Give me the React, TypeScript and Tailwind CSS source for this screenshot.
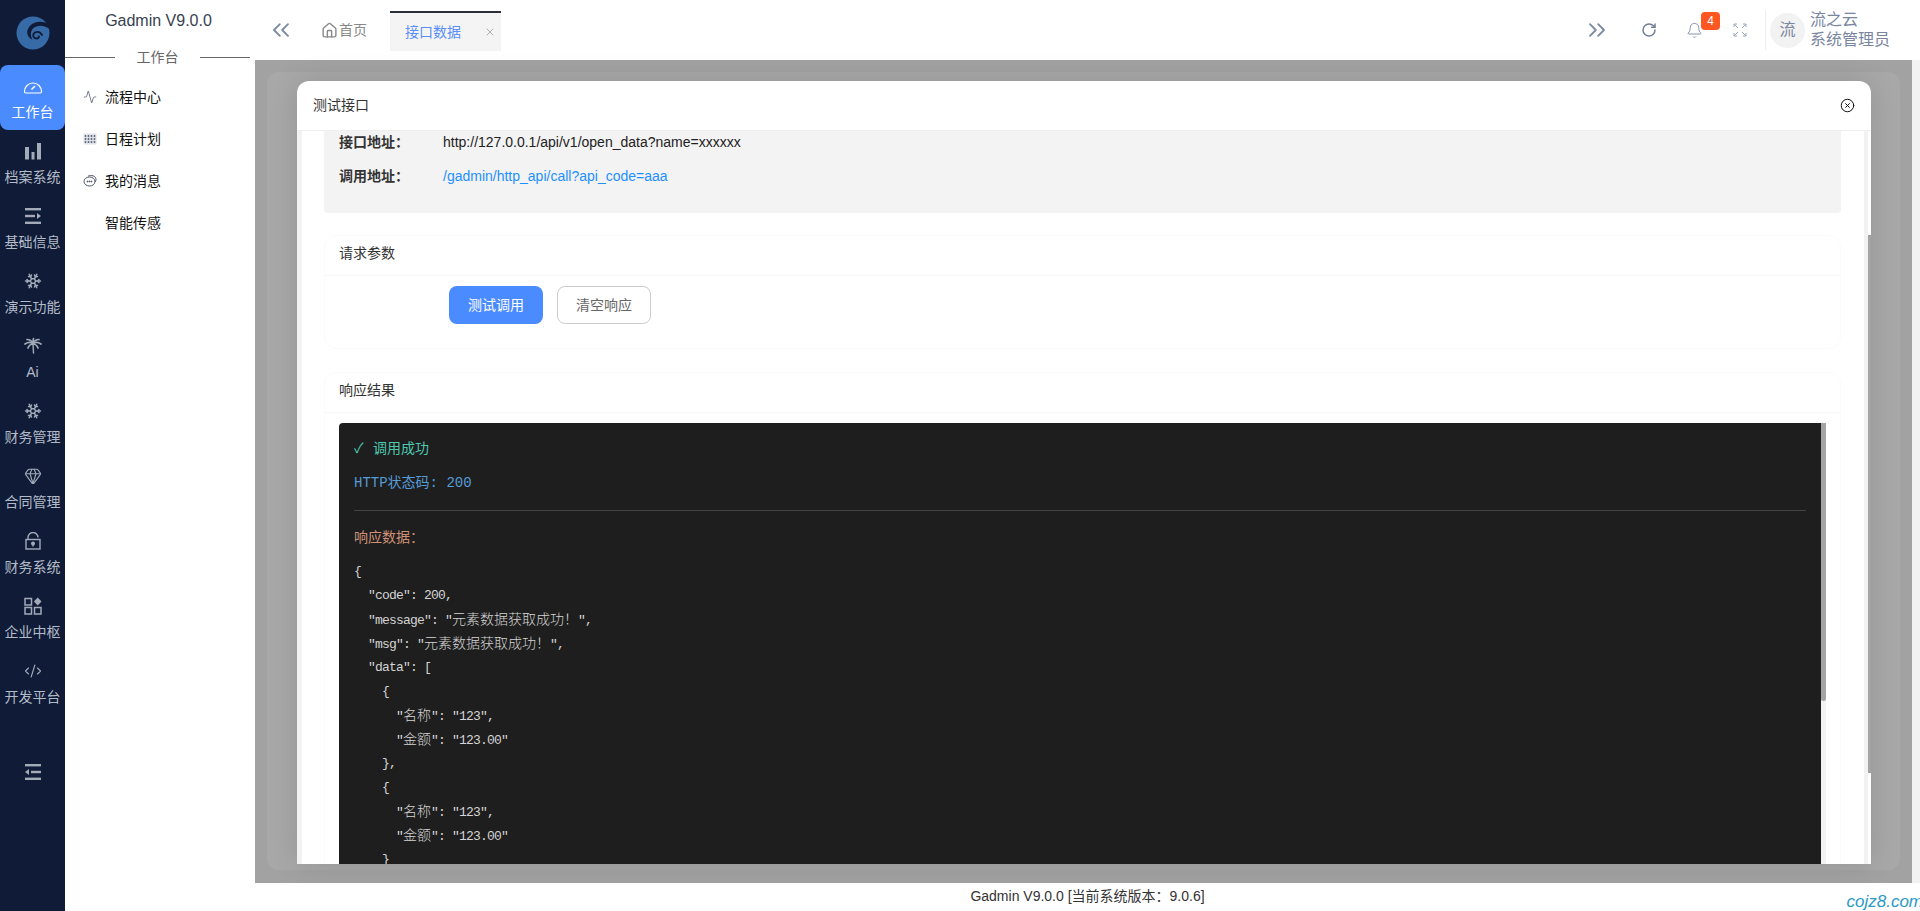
import { Activity, Bell, ChevronsLeft, ChevronsRight, CodeXml, Gem, Home, RotateCw, Snowflake, X, CircleX } from 'lucide-react';
import type { ReactNode } from 'react';

const railIcon = 'h-[18px] w-[18px]';

function GaugeIcon() {
  return (
    <svg viewBox="0 0 20 18" className="h-[18px] w-5" fill="none" stroke="currentColor" strokeWidth="1.2">
      <path d="M1.500 14.500a8.500 8.500 0 1 1 17 0c0 .8-.4 1.500-1.200 1.500H2.700c-.8 0-1.200-.7-1.200-1.500z" />
      <path d="M8.500 12.500 12 9" strokeWidth="1.600" />
    </svg>
  );
}

function BarsIcon() {
  return (
    <svg viewBox="0 0 18 18" className={railIcon} fill="currentColor">
      <rect x="1" y="5" width="4" height="12.500" />
      <rect x="7.500" y="10" width="3" height="7.500" />
      <rect x="13" y="1" width="4" height="16.500" />
    </svg>
  );
}

function LinesIcon({ flip }: { flip?: boolean }) {
  return (
    <svg viewBox="0 0 18 18" className={`${railIcon} ${flip ? '-scale-x-100' : ''}`} fill="currentColor">
      <rect x="1" y="1" width="16" height="2.400" />
      <rect x="1" y="7.800" width="10" height="2.400" />
      <path d="M13 6l4 3-4 3z" />
      <rect x="1" y="14.600" width="16" height="2.400" />
    </svg>
  );
}

function PalmIcon() {
  return (
    <svg viewBox="0 0 18 18" className={railIcon} fill="none" stroke="currentColor" strokeWidth="1.700" strokeLinecap="round">
      <path d="M9 7C7 5 4 5 1 7" />
      <path d="M9 7C8 4 6 2.500 3 2.500" />
      <path d="M9 7c0-2 0-4 .5-5.500" />
      <path d="M9 7c1-3 3-4.500 6-4.500" />
      <path d="M9 7c2-2 5-2 8 0" />
      <path d="M9 7c-2 0-4 1.500-5 4" />
      <path d="M9 7c2 0 4 1.500 5 4" />
      <path d="M9 7l.5 9" strokeWidth="1.400" />
    </svg>
  );
}

function LockIcon() {
  return (
    <svg viewBox="0 0 18 18" className={railIcon} fill="none" stroke="currentColor" strokeWidth="1.400">
      <path d="M4 7V5.500a5 5 0 0 1 10 0" />
      <rect x="2" y="7.500" width="14" height="9.500" />
      <circle cx="9" cy="11.500" r="1.300" fill="currentColor" />
      <path d="M9 12v2.500" />
    </svg>
  );
}

function AppsIcon() {
  return (
    <svg viewBox="0 0 18 18" className={railIcon} fill="none" stroke="currentColor" strokeWidth="1.500">
      <rect x="1" y="1.500" width="6.500" height="6.500" />
      <rect x="1" y="10.500" width="6.500" height="6.500" />
      <rect x="10.500" y="10.500" width="6.500" height="6.500" />
      <path d="M13.700 .5 17.500 4.500l-3.800 4-3.800-4z" fill="currentColor" stroke="none" />
    </svg>
  );
}

function Logo() {
  return (
    <svg viewBox="0 0 34 34" className="h-[34px] w-[34px]">
      <circle cx="17" cy="17" r="16.500" fill="#376ba8" />
      <path d="M36 11C29 3 15 4 11.500 14c-1.200 4 1 8 5 10-2-4-2.500-8 .5-11.500C22 8 30 9 36 15z" fill="#0f1b37" />
      <path d="M26 19c-2-4-7-4-8.500-1-1 2 .5 4.500 3 4.500 1.500 0 2.500-1 2.500-2.200" fill="none" stroke="#0f1b37" strokeWidth="1.800" strokeLinecap="round" />
    </svg>
  );
}

function CalendarDots() {
  return (
    <svg viewBox="0 0 14 14" className="h-[14px] w-[14px]">
      <rect x="0.500" y="1.500" width="13" height="11" fill="#dfe2e9" />
      {[2.500, 5.500, 8.500, 11.500].map((x) =>
        [4, 7, 10].map((y) => <rect key={`${x}-${y}`} x={x - 0.75} y={y - 0.75} width="1.500" height="1.500" fill="#3d4659" />),
      )}
    </svg>
  );
}

function ChatIcon() {
  return (
    <svg viewBox="0 0 14 14" className="h-[14px] w-[14px]" fill="none" stroke="#4b5468" strokeWidth="1">
      <ellipse cx="6.500" cy="7.500" rx="5.500" ry="4.500" />
      <path d="M5 2.200c3-1.500 8-.5 8 3.300 0 1-.3 1.700-1 2.500" />
      <circle cx="4.500" cy="7.500" r=".5" fill="#4b5468" />
      <circle cx="6.500" cy="7.500" r=".5" fill="#4b5468" />
      <circle cx="8.500" cy="7.500" r=".5" fill="#4b5468" />
    </svg>
  );
}

function ExpandIcon() {
  return (
    <svg viewBox="0 0 14 14" className="h-[14px] w-[14px]" fill="none" stroke="#9aa5b8" strokeWidth="1">
      <path d="M1 4V1h3M1 1l4 4M10 1h3v3M13 1 9 5M1 10v3h3M1 13l4-4M13 10v3h-3M13 13 9 9" />
    </svg>
  );
}

const railItems: { label: string; icon: ReactNode }[] = [
  { label: '档案系统', icon: <BarsIcon /> },
  { label: '基础信息', icon: <LinesIcon /> },
  { label: '演示功能', icon: <Snowflake className={railIcon} strokeWidth={2} /> },
  { label: 'Ai', icon: <PalmIcon /> },
  { label: '财务管理', icon: <Snowflake className={railIcon} strokeWidth={2} /> },
  { label: '合同管理', icon: <Gem className={railIcon} strokeWidth={1.500} /> },
  { label: '财务系统', icon: <LockIcon /> },
  { label: '企业中枢', icon: <AppsIcon /> },
  { label: '开发平台', icon: <CodeXml className={railIcon} strokeWidth={1.500} /> },
];

const menuItems: { label: string; icon: ReactNode }[] = [
  { label: '流程中心', icon: <Activity className="h-[14px] w-[14px] text-[#4b5468]" strokeWidth={1.300} /> },
  { label: '日程计划', icon: <CalendarDots /> },
  { label: '我的消息', icon: <ChatIcon /> },
  { label: '智能传感', icon: null },
];

const jsonLines = [
  '{',
  '  "code": 200,',
  '  "message": "元素数据获取成功！",',
  '  "msg": "元素数据获取成功！",',
  '  "data": [',
  '    {',
  '      "名称": "123",',
  '      "金额": "123.00"',
  '    },',
  '    {',
  '      "名称": "123",',
  '      "金额": "123.00"',
  '    }',
];

// latin glyphs are half the width of the chinese ones in the response block
function JsonLine({ text }: { text: string }) {
  const parts = text.split(/([\u4e00-\u9fff！]+)/);
  return (
    <div className="h-6">
      {parts.map((part, i) =>
        i % 2 === 1 ? (
          <span key={i} className="text-[14px] font-light tracking-normal">
            {part}
          </span>
        ) : (
          <span key={i}>{part}</span>
        ),
      )}
    </div>
  );
}

function SectionTitle({ title }: { title: string }) {
  return (
    <div className="flex h-10 items-center border-b border-[#f7f7f7] px-[14px] pb-[5px] text-[14px] text-[#333]">{title}</div>
  );
}

export default function App() {
  return (
    <div className="flex h-[911px] w-[1920px] overflow-hidden bg-white font-['Liberation_Sans','Noto_Sans_CJK_SC',sans-serif]">
      <aside className="flex w-[65px] shrink-0 flex-col bg-[#0f1b37] text-[#b4bbc8]">
        <div className="flex h-[65px] items-center justify-center">
          <Logo />
        </div>
        <div className="flex h-[65px] flex-col items-center rounded-lg bg-[#4a8bff] pt-3 text-white">
          <GaugeIcon />
          <span className="mt-[7px] text-[14px] leading-5">工作台</span>
        </div>
        {railItems.map((item) => (
          <div key={item.label} className="flex h-[65px] flex-col items-center pt-3">
            <div className="text-[#a3abb9]">{item.icon}</div>
            <span className="mt-[7px] text-[14px] leading-5">{item.label}</span>
          </div>
        ))}
        <div className="mt-12 flex justify-center text-[#a3abb9]">
          <LinesIcon flip />
        </div>
      </aside>

      <nav className="w-[190px] shrink-0 bg-white">
        <div className="flex h-[42px] w-[187px] items-center justify-center text-[16px] text-[#374151]">Gadmin V9.0.0</div>
        <div className="flex h-[30px] w-[185px] items-center text-[14px] text-[#666]">
          <div className="h-px w-[50px] bg-[#666]" />
          <div className="flex-1 text-center">工作台</div>
          <div className="h-px w-[50px] bg-[#666]" />
        </div>
        <ul className="mt-1">
          {menuItems.map((item) => (
            <li key={item.label} className="flex h-[42px] items-center text-[14px] text-[#111]">
              <div className="ml-[18px] flex w-[22px] shrink-0">{item.icon}</div>
              {item.label}
            </li>
          ))}
        </ul>
      </nav>

      <div className="flex min-w-0 flex-1 flex-col">
        <header className="flex h-[60px] shrink-0 items-center bg-white">
          <ChevronsLeft className="ml-[12px] h-[28px] w-[28px] text-[#7d8aa3]" strokeWidth={1.600} />
          <div className="ml-[26px] flex items-center text-[14px] text-[#888]">
            <Home className="mr-[1px] h-[17px] w-[17px]" strokeWidth={2} />
            首页
          </div>
          <div className="ml-[23px] mt-[2px] flex h-10 w-[111px] items-center border-t-2 border-[#2a2d3a] bg-[#f4f4f4] pl-[15px] text-[14px] text-[#5a8ffa]">
            接口数据
            <X className="ml-[23px] h-3 w-3 text-[#888]" strokeWidth={1.300} />
          </div>

          <div className="ml-auto flex items-center pr-[30px]">
            <ChevronsRight className="h-[28px] w-[28px] text-[#7d8aa3]" strokeWidth={1.600} />
            <RotateCw className="ml-[30px] h-[16px] w-[16px] text-[#6f7d96]" strokeWidth={2.200} />
            <div className="relative ml-[29px]">
              <Bell className="h-[17px] w-[17px] text-[#7d8aa3]" strokeWidth={1.300} />
              <span className="absolute -top-[10px] left-[15px] flex h-[18px] w-[19px] items-center justify-center rounded-sm bg-[#ff5722] text-[12px] text-white">
                4
              </span>
            </div>
            <div className="ml-[30px]">
              <ExpandIcon />
            </div>
            <div className="ml-[18px] h-10 w-px bg-[#eee]" />
            <div className="ml-[4px] flex h-[35px] w-[35px] items-center justify-center rounded-full bg-[#f2f2f2] text-[16px] text-[#7a869f]">
              流
            </div>
            <div className="ml-[5px] w-20 text-[16px] leading-5 text-[#7a869f]">
              <div>流之云</div>
              <div className="whitespace-nowrap">系统管理员</div>
            </div>
          </div>
        </header>

        <div className="flex min-h-0 flex-1">
          <main className="flex min-w-0 flex-1 bg-[#a2a2a2] pb-[13px] pl-3 pr-3 pt-3">
            <div className="flex min-w-0 flex-1 rounded-xl bg-[#a8a8a8] pb-[6px] pl-[30px] pr-[29px] pt-[9px]">
              <section className="flex min-w-0 flex-1 flex-col overflow-hidden rounded-t-xl bg-white shadow-[0_0_30px_rgba(0,0,0,0.12)]">
                <div className="flex h-[50px] shrink-0 items-center justify-between border-b border-[#eee] pl-4 pr-4 text-[14px] text-[#333]">
                  测试接口
                  <CircleX className="h-[15px] w-[15px] text-[#111]" strokeWidth={1.600} />
                </div>

                <div className="flex min-h-0 flex-1">
                  <div className="w-[5px] shrink-0 bg-[#f2f2f2]" />
                  <div className="min-w-0 flex-1 overflow-hidden pl-[22px] pr-[23px]">
                    <div className="flex h-[82px] flex-col rounded-b bg-[#f3f3f3] px-[15px] text-[14px]">
                      <div className="flex h-[22px] items-center">
                        <span className="w-[104px] font-bold text-[#333]">接口地址：</span>
                        <span className="text-[#222]">http://127.0.0.1/api/v1/open_data?name=xxxxxx</span>
                      </div>
                      <div className="mt-3 flex h-[22px] items-center">
                        <span className="w-[104px] font-bold text-[#333]">调用地址：</span>
                        <span className="text-[#1e90ff]">/gadmin/http_api/call?api_code=aaa</span>
                      </div>
                    </div>

                    <div className="mt-[22px] h-[114px] rounded-xl border border-[#fbfbfb]">
                      <SectionTitle title="请求参数" />
                      <div className="ml-[124px] mt-[10px] flex gap-[14px]">
                        <button className="h-[38px] w-[94px] rounded-lg bg-[#4a8bff] text-[14px] text-white">测试调用</button>
                        <button className="h-[38px] w-[94px] rounded-lg border border-[#ccc] bg-white text-[14px] text-[#666]">清空响应</button>
                      </div>
                    </div>

                    <div className="mt-[23px] rounded-xl border border-[#fbfbfb]">
                      <SectionTitle title="响应结果" />
                      <div className="mx-[14px] mt-[10px] flex h-[600px]">
                        <div className="min-w-0 flex-1 rounded-tl bg-[#1e1e1e] px-[15px] pt-[14px]">
                          <div className="flex h-[22px] items-center text-[14px] text-[#4ec9b0]">
                            <span className="w-[19px]">✓</span>调用成功
                          </div>
                          <div className="mt-[13px] font-['Liberation_Mono','Noto_Sans_CJK_SC',monospace] text-[14px] leading-[22px] text-[#569cd6]">
                            HTTP状态码: 200
                          </div>
                          <div className="mt-[16px] h-px bg-[#444]" />
                          <div className="mt-[15px] text-[14px] leading-[22px] text-[#ce9178]">响应数据：</div>
                          <pre className="mt-[12px] font-['Liberation_Mono','Noto_Sans_CJK_SC',monospace] text-[13px] leading-6 tracking-[-0.8px] text-[#d4d4d4]">
                            {jsonLines.map((line, i) => (
                              <JsonLine key={i} text={line} />
                            ))}
                          </pre>
                        </div>
                        <div className="w-[5px] shrink-0 bg-[#f2f2f2]">
                          <div className="h-[278px] rounded-b-sm bg-[#a4a4a4]" />
                        </div>
                      </div>
                    </div>
                  </div>
                  <div className="flex w-[7px] shrink-0">
                    <div className="w-1 bg-[#f2f2f2]" />
                    <div className="w-[3px]">
                      <div className="mt-[104px] h-[538px] bg-[#a4a4a4]" />
                    </div>
                  </div>
                </div>
              </section>
            </div>
          </main>
          <div className="w-2 shrink-0 bg-[#f2f2f2]" />
        </div>

        <footer className="relative flex h-[28px] shrink-0 items-center justify-center bg-white pb-[2px] text-[14px] text-[#333]">
          Gadmin V9.0.0 [当前系统版本：9.0.6]
          <span className="absolute -right-[3px] top-[9px] text-[17px] italic leading-5 text-[#2a9ac7]">cojz8.com</span>
        </footer>
      </div>
    </div>
  );
}
